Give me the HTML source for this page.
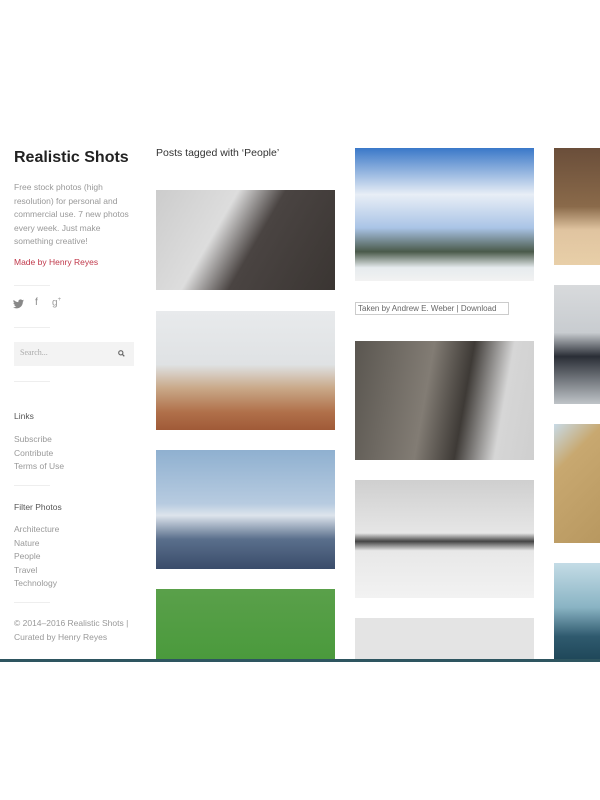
<!DOCTYPE html>
<html><head><style>
body{margin:0;width:600px;height:800px;background:#fff;font-family:"Liberation Sans",sans-serif;position:relative;overflow:hidden}
.a{position:absolute}
.t{font-size:8.5px;color:#999;line-height:13.5px}
.hr{position:absolute;left:14px;width:36px;height:1px;background:#eee}
.ph{position:absolute;overflow:hidden}
</style></head><body>
<div class="a" style="left:14px;top:149px;font-size:16px;font-weight:bold;color:#222">Realistic Shots</div>
<div class="a t" style="left:14px;top:181px;width:115px">Free stock photos (high resolution) for personal and commercial use. 7 new photos every week. Just make something creative!</div>
<div class="a t" style="left:14px;top:256px;color:#c0394b">Made by Henry Reyes</div>
<div class="hr" style="top:285px"></div>
<svg class="a" style="left:13px;top:299px" width="11" height="10" viewBox="0 0 24 20"><path fill="#888" d="M24 2.4a10 10 0 0 1-2.8.8A5 5 0 0 0 23.3.4a10 10 0 0 1-3.1 1.2A4.9 4.9 0 0 0 11.8 6 14 14 0 0 1 1.7.9a4.9 4.9 0 0 0 1.5 6.6A4.9 4.9 0 0 1 1 6.9a4.9 4.9 0 0 0 3.9 4.8 5 5 0 0 1-2.2.1 4.9 4.9 0 0 0 4.6 3.4A9.9 9.9 0 0 1 0 17.3 14 14 0 0 0 7.5 19.5c9 0 14-7.5 14-14v-.6A10 10 0 0 0 24 2.4z"/></svg>
<div class="a" style="left:35px;top:297px;font-size:10px;color:#888">f</div>
<div class="a" style="left:52px;top:297px;font-size:10px;color:#999">g<sup style="font-size:6px">+</sup></div>
<div class="hr" style="top:327px"></div>
<div class="a" style="left:14px;top:342px;width:120px;height:24px;background:#f3f3f3"></div>
<div class="a" style="left:20px;top:348px;font-size:8px;color:#aaa;font-family:'Liberation Serif',serif">Search...</div>
<svg class="a" style="left:118px;top:350px" width="7" height="7" viewBox="0 0 10 10"><circle cx="4" cy="4" r="3" fill="none" stroke="#666" stroke-width="1.6"/><path d="M6 6l3 3" stroke="#666" stroke-width="1.8"/></svg>
<div class="hr" style="top:381px"></div>
<div class="a" style="left:14px;top:411px;font-size:8.5px;color:#555">Links</div>
<div class="a t" style="left:14px;top:433px">Subscribe<br>Contribute<br>Terms of Use</div>
<div class="hr" style="top:485px"></div>
<div class="a" style="left:14px;top:502px;font-size:8.5px;color:#555">Filter Photos</div>
<div class="a t" style="left:14px;top:523px">Architecture<br>Nature<br>People<br>Travel<br>Technology</div>
<div class="hr" style="top:602px"></div>
<div class="a t" style="left:14px;top:617px">© 2014–2016 Realistic Shots |<br>Curated by Henry Reyes</div>
<div class="a" style="left:156px;top:147px;font-size:10.5px;color:#333">Posts tagged with ‘People’</div>

<div class="ph" style="left:156px;top:190px;width:179px;height:100px;background:linear-gradient(120deg,#ccc 0%,#ddd 35%,#4a4442 55%,#3a3532 100%)"></div>
<div class="ph" style="left:156px;top:311px;width:179px;height:119px;background:linear-gradient(180deg,#e8eaec 0%,#dfe2e4 45%,#c9a888 65%,#b0704a 85%,#a05a38 100%)"></div>
<div class="ph" style="left:156px;top:450px;width:179px;height:119px;background:linear-gradient(180deg,#8fb0d0 0%,#b7cbe0 45%,#dde4ec 55%,#5a6f8c 75%,#3a4c6a 100%)"></div>
<div class="ph" style="left:156px;top:589px;width:179px;height:72px;background:linear-gradient(180deg,#5aa04a,#4a9a3c)"></div>

<div class="ph" style="left:355px;top:148px;width:179px;height:133px;background:linear-gradient(180deg,#3a78c8 0%,#e8eef6 35%,#aac4e6 60%,#4a5a4a 78%,#e6ebee 90%,#f2f2f2 100%)"></div>
<div class="a" style="left:355px;top:302px;width:154px;height:13px;border:1px solid #ccc;box-sizing:border-box;font-size:8px;color:#666;line-height:11px;padding-left:2px;white-space:nowrap;overflow:hidden">Taken by Andrew E. Weber | Download</div>
<div class="ph" style="left:355px;top:341px;width:179px;height:119px;background:linear-gradient(100deg,#5a5650 0%,#827c74 40%,#3e3a36 60%,#d6d6d6 80%,#cfcfcf 100%)"></div>
<div class="ph" style="left:355px;top:480px;width:179px;height:118px;background:linear-gradient(180deg,#cfcfcf 0%,#e6e6e6 45%,#444 52%,#e8e8e8 60%,#f2f2f2 100%)"></div>
<div class="ph" style="left:355px;top:618px;width:179px;height:43px;background:#e4e4e4"></div>

<div class="ph" style="left:554px;top:148px;width:46px;height:117px;background:linear-gradient(180deg,#6a4e3a 0%,#8a6a4a 50%,#e0c4a0 70%,#e8cfa8 100%)"></div>
<div class="ph" style="left:554px;top:285px;width:46px;height:119px;background:linear-gradient(180deg,#d8dadc 0%,#c8ccd0 40%,#2a2e36 60%,#bfc4c8 100%)"></div>
<div class="ph" style="left:554px;top:424px;width:46px;height:119px;background:linear-gradient(135deg,#c8dae6 0%,#c8a870 30%,#b89860 100%)"></div>
<div class="ph" style="left:554px;top:563px;width:46px;height:98px;background:linear-gradient(180deg,#c4dce6 0%,#8ab4c4 45%,#2f5a6e 75%,#1e4658 100%)"></div>

<div class="a" style="left:0;top:659px;width:600px;height:3px;background:#2e5560"></div>
</body></html>
